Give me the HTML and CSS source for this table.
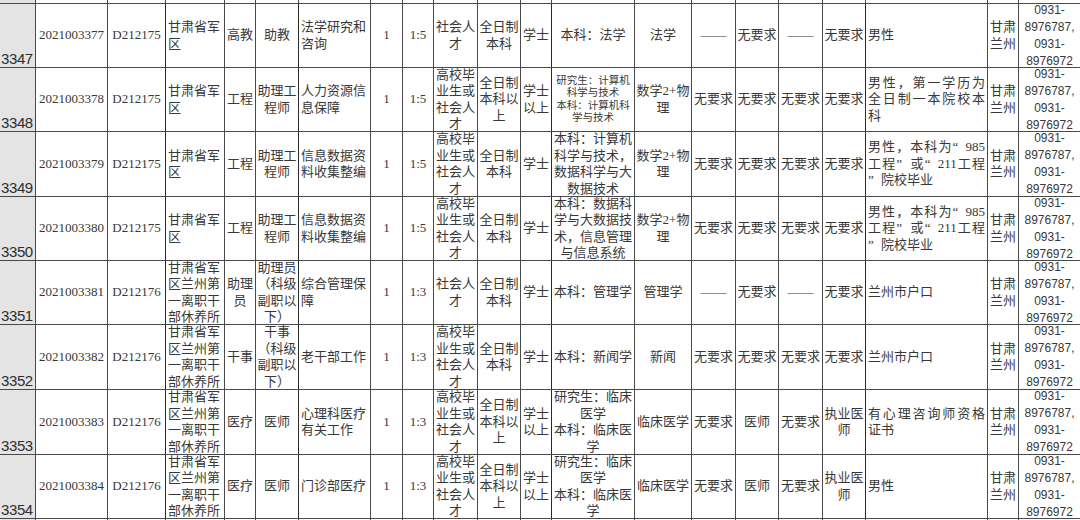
FILE: index.html
```html
<!DOCTYPE html>
<html lang="zh-CN">
<head>
<meta charset="utf-8">
<title>招录表</title>
<link rel="stylesheet" href="styles.css">
</head>
<body>
<div class="sheet">
  <!-- top strip -->
  <div class="rh"></div><div class="c"></div><div class="c"></div><div class="c"></div><div class="c"></div><div class="c"></div><div class="c"></div><div class="c"></div><div class="c"></div><div class="c"></div><div class="c"></div><div class="c"></div><div class="c"></div><div class="c"></div><div class="c"></div><div class="c"></div><div class="c"></div><div class="c"></div><div class="c"></div><div class="c"></div><div class="c"></div>

  <!-- 3347 -->
  <div class="rh"><span>3347</span></div>
  <div class="c"><div class="t">2021003377</div></div>
  <div class="c"><div class="t">D212175</div></div>
  <div class="c l dk"><div class="t">甘肃省军<br>区</div></div>
  <div class="c"><div class="t">高教</div></div>
  <div class="c"><div class="t">助教</div></div>
  <div class="c l dk"><div class="t">法学研究和<br>咨询</div></div>
  <div class="c"><div class="t">1</div></div>
  <div class="c"><div class="t">1:5</div></div>
  <div class="c"><div class="t">社会人<br>才</div></div>
  <div class="c"><div class="t">全日制<br>本科</div></div>
  <div class="c"><div class="t">学士</div></div>
  <div class="c dk"><div class="t">本科：法学</div></div>
  <div class="c"><div class="t">法学</div></div>
  <div class="c"><div class="t">——</div></div>
  <div class="c"><div class="t">无要求</div></div>
  <div class="c"><div class="t">——</div></div>
  <div class="c"><div class="t">无要求</div></div>
  <div class="c l dk"><div class="t">男性</div></div>
  <div class="c"><div class="t">甘肃<br>兰州</div></div>
  <div class="c ph"><div class="t">0931-<br>8976787,<br>0931-<br>8976972</div></div>

  <!-- 3348 -->
  <div class="rh"><span>3348</span></div>
  <div class="c"><div class="t">2021003378</div></div>
  <div class="c"><div class="t">D212175</div></div>
  <div class="c l dk"><div class="t">甘肃省军<br>区</div></div>
  <div class="c"><div class="t">工程</div></div>
  <div class="c"><div class="t">助理工<br>程师</div></div>
  <div class="c l dk"><div class="t">人力资源信<br>息保障</div></div>
  <div class="c"><div class="t">1</div></div>
  <div class="c"><div class="t">1:5</div></div>
  <div class="c"><div class="t">高校毕<br>业生或<br>社会人<br>才</div></div>
  <div class="c"><div class="t">全日制<br>本科以<br>上</div></div>
  <div class="c"><div class="t">学士<br>以上</div></div>
  <div class="c dk sm"><div class="t">研究生：计算机<br>科学与技术<br>本科：计算机科<br>学与技术</div></div>
  <div class="c"><div class="t">数学2+物<br>理</div></div>
  <div class="c"><div class="t">无要求</div></div>
  <div class="c"><div class="t">无要求</div></div>
  <div class="c"><div class="t">无要求</div></div>
  <div class="c"><div class="t">无要求</div></div>
  <div class="c l dk"><div class="t"><div class="jl">男性，第一学历为</div><div class="jl">全日制一本院校本</div><div>科</div></div></div>
  <div class="c"><div class="t">甘肃<br>兰州</div></div>
  <div class="c ph"><div class="t">0931-<br>8976787,<br>0931-<br>8976972</div></div>

  <!-- 3349 -->
  <div class="rh"><span>3349</span></div>
  <div class="c"><div class="t">2021003379</div></div>
  <div class="c"><div class="t">D212175</div></div>
  <div class="c l dk"><div class="t">甘肃省军<br>区</div></div>
  <div class="c"><div class="t">工程</div></div>
  <div class="c"><div class="t">助理工<br>程师</div></div>
  <div class="c l dk"><div class="t">信息数据资<br>料收集整编</div></div>
  <div class="c"><div class="t">1</div></div>
  <div class="c"><div class="t">1:5</div></div>
  <div class="c"><div class="t">高校毕<br>业生或<br>社会人<br>才</div></div>
  <div class="c"><div class="t">全日制<br>本科</div></div>
  <div class="c"><div class="t">学士</div></div>
  <div class="c dk"><div class="t">本科：计算机<br>科学与技术，<br>数据科学与大<br>数据技术</div></div>
  <div class="c"><div class="t">数学2+物<br>理</div></div>
  <div class="c"><div class="t">无要求</div></div>
  <div class="c"><div class="t">无要求</div></div>
  <div class="c"><div class="t">无要求</div></div>
  <div class="c"><div class="t">无要求</div></div>
  <div class="c l dk"><div class="t"><div class="jl">男性，本科为<span class="qo">“</span>985</div><div class="jl">工程<span class="qc">”</span>或<span class="qo">“</span>211工程</div><div><span class="qc">”</span>院校毕业</div></div></div>
  <div class="c"><div class="t">甘肃<br>兰州</div></div>
  <div class="c ph"><div class="t">0931-<br>8976787,<br>0931-<br>8976972</div></div>

  <!-- 3350 -->
  <div class="rh"><span>3350</span></div>
  <div class="c"><div class="t">2021003380</div></div>
  <div class="c"><div class="t">D212175</div></div>
  <div class="c l dk"><div class="t">甘肃省军<br>区</div></div>
  <div class="c"><div class="t">工程</div></div>
  <div class="c"><div class="t">助理工<br>程师</div></div>
  <div class="c l dk"><div class="t">信息数据资<br>料收集整编</div></div>
  <div class="c"><div class="t">1</div></div>
  <div class="c"><div class="t">1:5</div></div>
  <div class="c"><div class="t">高校毕<br>业生或<br>社会人<br>才</div></div>
  <div class="c"><div class="t">全日制<br>本科</div></div>
  <div class="c"><div class="t">学士</div></div>
  <div class="c dk"><div class="t">本科：数据科<br>学与大数据技<br>术，信息管理<br>与信息系统</div></div>
  <div class="c"><div class="t">数学2+物<br>理</div></div>
  <div class="c"><div class="t">无要求</div></div>
  <div class="c"><div class="t">无要求</div></div>
  <div class="c"><div class="t">无要求</div></div>
  <div class="c"><div class="t">无要求</div></div>
  <div class="c l dk"><div class="t"><div class="jl">男性，本科为<span class="qo">“</span>985</div><div class="jl">工程<span class="qc">”</span>或<span class="qo">“</span>211工程</div><div><span class="qc">”</span>院校毕业</div></div></div>
  <div class="c"><div class="t">甘肃<br>兰州</div></div>
  <div class="c ph"><div class="t">0931-<br>8976787,<br>0931-<br>8976972</div></div>

  <!-- 3351 -->
  <div class="rh"><span>3351</span></div>
  <div class="c"><div class="t">2021003381</div></div>
  <div class="c"><div class="t">D212176</div></div>
  <div class="c l dk"><div class="t">甘肃省军<br>区兰州第<br>一离职干<br>部休养所</div></div>
  <div class="c"><div class="t">助理<br>员</div></div>
  <div class="c"><div class="t">助理员<br>（科级<br>副职以<br>下）</div></div>
  <div class="c l dk"><div class="t">综合管理保<br>障</div></div>
  <div class="c"><div class="t">1</div></div>
  <div class="c"><div class="t">1:3</div></div>
  <div class="c"><div class="t">社会人<br>才</div></div>
  <div class="c"><div class="t">全日制<br>本科</div></div>
  <div class="c"><div class="t">学士</div></div>
  <div class="c dk"><div class="t">本科：管理学</div></div>
  <div class="c"><div class="t">管理学</div></div>
  <div class="c"><div class="t">——</div></div>
  <div class="c"><div class="t">无要求</div></div>
  <div class="c"><div class="t">——</div></div>
  <div class="c"><div class="t">无要求</div></div>
  <div class="c l dk"><div class="t">兰州市户口</div></div>
  <div class="c"><div class="t">甘肃<br>兰州</div></div>
  <div class="c ph"><div class="t">0931-<br>8976787,<br>0931-<br>8976972</div></div>

  <!-- 3352 -->
  <div class="rh"><span>3352</span></div>
  <div class="c"><div class="t">2021003382</div></div>
  <div class="c"><div class="t">D212176</div></div>
  <div class="c l dk"><div class="t">甘肃省军<br>区兰州第<br>一离职干<br>部休养所</div></div>
  <div class="c"><div class="t">干事</div></div>
  <div class="c"><div class="t">干事<br>（科级<br>副职以<br>下）</div></div>
  <div class="c l dk"><div class="t">老干部工作</div></div>
  <div class="c"><div class="t">1</div></div>
  <div class="c"><div class="t">1:3</div></div>
  <div class="c"><div class="t">高校毕<br>业生或<br>社会人<br>才</div></div>
  <div class="c"><div class="t">全日制<br>本科</div></div>
  <div class="c"><div class="t">学士</div></div>
  <div class="c dk"><div class="t">本科：新闻学</div></div>
  <div class="c"><div class="t">新闻</div></div>
  <div class="c"><div class="t">无要求</div></div>
  <div class="c"><div class="t">无要求</div></div>
  <div class="c"><div class="t">无要求</div></div>
  <div class="c"><div class="t">无要求</div></div>
  <div class="c l dk"><div class="t">兰州市户口</div></div>
  <div class="c"><div class="t">甘肃<br>兰州</div></div>
  <div class="c ph"><div class="t">0931-<br>8976787,<br>0931-<br>8976972</div></div>

  <!-- 3353 -->
  <div class="rh"><span>3353</span></div>
  <div class="c"><div class="t">2021003383</div></div>
  <div class="c"><div class="t">D212176</div></div>
  <div class="c l dk"><div class="t">甘肃省军<br>区兰州第<br>一离职干<br>部休养所</div></div>
  <div class="c"><div class="t">医疗</div></div>
  <div class="c"><div class="t">医师</div></div>
  <div class="c l dk"><div class="t">心理科医疗<br>有关工作</div></div>
  <div class="c"><div class="t">1</div></div>
  <div class="c"><div class="t">1:3</div></div>
  <div class="c"><div class="t">高校毕<br>业生或<br>社会人<br>才</div></div>
  <div class="c"><div class="t">全日制<br>本科以<br>上</div></div>
  <div class="c"><div class="t">学士<br>以上</div></div>
  <div class="c dk"><div class="t">研究生：临床<br>医学<br>本科：临床医<br>学</div></div>
  <div class="c"><div class="t">临床医学</div></div>
  <div class="c"><div class="t">无要求</div></div>
  <div class="c"><div class="t">医师</div></div>
  <div class="c"><div class="t">无要求</div></div>
  <div class="c"><div class="t">执业医<br>师</div></div>
  <div class="c l dk"><div class="t"><div class="jl">有心理咨询师资格</div><div>证书</div></div></div>
  <div class="c"><div class="t">甘肃<br>兰州</div></div>
  <div class="c ph"><div class="t">0931-<br>8976787,<br>0931-<br>8976972</div></div>

  <!-- 3354 -->
  <div class="rh"><span>3354</span></div>
  <div class="c"><div class="t">2021003384</div></div>
  <div class="c"><div class="t">D212176</div></div>
  <div class="c l dk"><div class="t">甘肃省军<br>区兰州第<br>一离职干<br>部休养所</div></div>
  <div class="c"><div class="t">医疗</div></div>
  <div class="c"><div class="t">医师</div></div>
  <div class="c l dk"><div class="t">门诊部医疗</div></div>
  <div class="c"><div class="t">1</div></div>
  <div class="c"><div class="t">1:3</div></div>
  <div class="c"><div class="t">高校毕<br>业生或<br>社会人<br>才</div></div>
  <div class="c"><div class="t">全日制<br>本科以<br>上</div></div>
  <div class="c"><div class="t">学士<br>以上</div></div>
  <div class="c dk"><div class="t">研究生：临床<br>医学<br>本科：临床医<br>学</div></div>
  <div class="c"><div class="t">临床医学</div></div>
  <div class="c"><div class="t">无要求</div></div>
  <div class="c"><div class="t">医师</div></div>
  <div class="c"><div class="t">无要求</div></div>
  <div class="c"><div class="t">执业医<br>师</div></div>
  <div class="c l dk"><div class="t">男性</div></div>
  <div class="c"><div class="t">甘肃<br>兰州</div></div>
  <div class="c ph"><div class="t">0931-<br>8976787,<br>0931-<br>8976972</div></div>

  <!-- bottom strip -->
  <div class="rh"></div><div class="c"></div><div class="c"></div><div class="c"></div><div class="c"></div><div class="c"></div><div class="c"></div><div class="c"></div><div class="c"></div><div class="c"></div><div class="c"></div><div class="c"></div><div class="c"></div><div class="c"></div><div class="c"></div><div class="c"></div><div class="c"></div><div class="c"></div><div class="c"></div><div class="c"></div><div class="c"></div>
</div>
</body>
</html>
```
FILE: styles.css
```css
html, body {
  margin: 0;
  padding: 0;
  background: #ffffff;
  overflow: hidden;
}

.sheet {
  width: 1080px;
  height: 520px;
  overflow: hidden;
  display: grid;
  grid-template-columns: 35px 71px 57px 58px 30px 42px 71px 31px 30px 43px 42px 30px 82px 56px 43px 42px 43px 42px 121px 30px 61px;
  grid-template-rows: 3px 63px 63px 64px 63px 63px 64px 64px 63px 20px;
  gap: 1px;
  background: #4a4a4a;
  font-family: "Liberation Serif", "Noto Sans CJK SC", serif;
  font-size: 13px;
  line-height: 16.5px;
  color: #383838;
}

.rh {
  background: #e4e4e4;
  display: flex;
  align-items: flex-end;
  overflow: hidden;
  font-family: "Liberation Sans", "Noto Sans", sans-serif;
  font-size: 15px;
  line-height: 16px;
  letter-spacing: -0.4px;
  color: #2e2e2e;
  padding-left: 1px;
}

.c {
  background: #ffffff;
  display: flex;
  align-items: center;
  justify-content: center;
  overflow: hidden;
  padding: 0 2px;
  min-width: 0;
  min-height: 0;
}

.c .t {
  text-align: center;
  white-space: nowrap;
}

.c.l {
  justify-content: flex-start;
}

.c.l .t {
  text-align: left;
  width: 100%;
}

.c.dk {
  box-shadow: -1px 0 0 #2a2a2a;
}

.jl {
  text-align: justify;
  text-align-last: justify;
  text-justify: inter-character;
}

.qo, .qc {
  display: inline-block;
  width: 13px;
  font-family: "Liberation Serif", serif;
}

.qo {
  text-align: right;
}

.qc {
  text-align: left;
}

.c.sm {
  font-size: 10.5px;
  line-height: 12.5px;
}

.c.ph {
  font-family: "Liberation Sans", "Noto Sans", sans-serif;
  font-size: 12px;
  line-height: 17px;
}
```
